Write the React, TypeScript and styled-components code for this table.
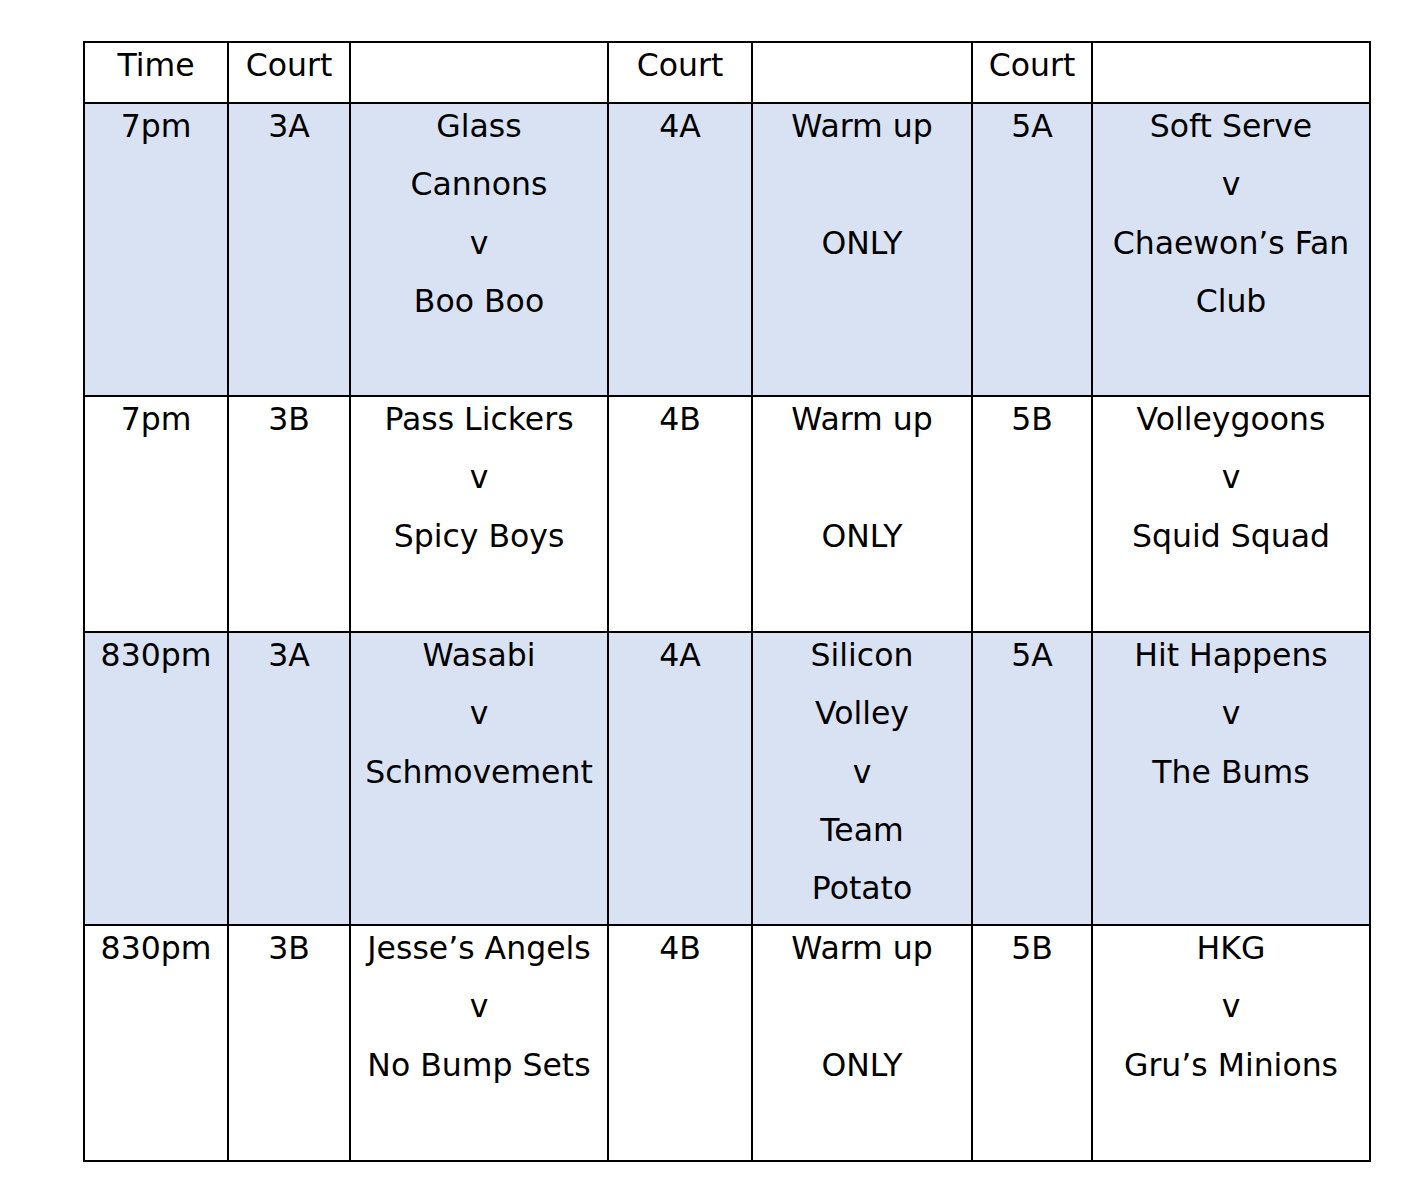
import React from "react";
import styled, { createGlobalStyle } from "styled-components";

const Global = createGlobalStyle`
  html, body { margin: 0; padding: 0; background: #ffffff; }
  body { font-family: "DejaVu Sans", Verdana, sans-serif; color: #000; }
`;

const Page = styled.div`
  padding: 41px 0 0 83px;
  width: 1426px;
  height: 1204px;
  box-sizing: border-box;
`;

const Grid = styled.div`
  display: grid;
  grid-template-columns: 144px 122px 258px 144px 220px 120px 278px;
  width: max-content;
  border-left: 2px solid #000;
  border-top: 2px solid #000;
`;

const Cell = styled.div<{ $shaded: boolean; $h: number }>`
  box-sizing: border-box;
  height: ${(p) => p.$h}px;
  border-right: 2px solid #000;
  border-bottom: 2px solid #000;
  background: ${(p) => (p.$shaded ? "#D9E2F3" : "#ffffff")};
  text-align: center;
  font-size: 31.5px;
  overflow: hidden;
`;

const Lines = styled.div`
  margin-top: -7px;
`;

const Line = styled.div`
  height: 58.3px;
  line-height: 58.3px;
  white-space: nowrap;
`;

type Row = { shaded: boolean; h: number; cells: string[][] };

const rows: Row[] = [
  {
    shaded: false,
    h: 61,
    cells: [["Time"], ["Court"], [""], ["Court"], [""], ["Court"], [""]],
  },
  {
    shaded: true,
    h: 293,
    cells: [
      ["7pm"],
      ["3A"],
      ["Glass", "Cannons", "v", "Boo Boo"],
      ["4A"],
      ["Warm up", "", "ONLY"],
      ["5A"],
      ["Soft Serve", "v", "Chaewon\u2019s Fan", "Club"],
    ],
  },
  {
    shaded: false,
    h: 236,
    cells: [
      ["7pm"],
      ["3B"],
      ["Pass Lickers", "v", "Spicy Boys"],
      ["4B"],
      ["Warm up", "", "ONLY"],
      ["5B"],
      ["Volleygoons", "v", "Squid Squad"],
    ],
  },
  {
    shaded: true,
    h: 293,
    cells: [
      ["830pm"],
      ["3A"],
      ["Wasabi", "v", "Schmovement"],
      ["4A"],
      ["Silicon", "Volley", "v", "Team", "Potato"],
      ["5A"],
      ["Hit Happens", "v", "The Bums"],
    ],
  },
  {
    shaded: false,
    h: 236,
    cells: [
      ["830pm"],
      ["3B"],
      ["Jesse\u2019s Angels", "v", "No Bump Sets"],
      ["4B"],
      ["Warm up", "", "ONLY"],
      ["5B"],
      ["HKG", "v", "Gru\u2019s Minions"],
    ],
  },
];

export default function App() {
  return (
    <>
      <Global />
      <Page>
        <Grid>
          {rows.map((r, ri) =>
            r.cells.map((c, ci) => (
              <Cell key={`${ri}-${ci}`} $shaded={r.shaded} $h={r.h}>
                <Lines>
                  {c.map((t, li) => (
                    <Line key={li}>{t || "\u00a0"}</Line>
                  ))}
                </Lines>
              </Cell>
            ))
          )}
        </Grid>
      </Page>
    </>
  );
}
